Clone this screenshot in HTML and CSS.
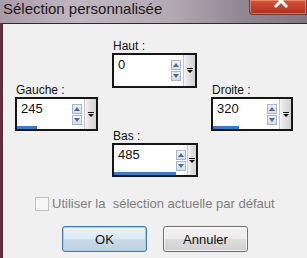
FILE: index.html
```html
<!DOCTYPE html>
<html>
<head>
<meta charset="utf-8">
<link rel="stylesheet" href="styles.css">
</head>
<body>
<div class="window">
  <div class="titlebar">
    <span class="title">Sélection personnalisée</span>
    <div class="close">
      <svg class="x" width="16" height="10" viewBox="0 0 16 10"><path d="M3 -4 L13 6 M13 -4 L3 6" stroke="#fff" stroke-width="3" stroke-linecap="square" fill="none"/></svg>
    </div>
  </div>
  <div class="content">
    <div class="fields">
      <div class="field f-haut">
        <div class="label">Haut :</div>
        <div class="box">
          <div class="val"><span class="num">0</span><span class="bar" style="width:0px"></span></div>
          <div class="spin"><span class="sb up"></span><span class="sb down"></span></div>
          <div class="drop"><span class="dglyph"></span></div>
        </div>
      </div>
      <div class="field f-gauche">
        <div class="label">Gauche :</div>
        <div class="box">
          <div class="val"><span class="num">245</span><span class="bar" style="width:20px"></span></div>
          <div class="spin"><span class="sb up"></span><span class="sb down"></span></div>
          <div class="drop"><span class="dglyph"></span></div>
        </div>
      </div>
      <div class="field f-droite">
        <div class="label">Droite :</div>
        <div class="box">
          <div class="val"><span class="num">320</span><span class="bar" style="width:26px"></span></div>
          <div class="spin"><span class="sb up"></span><span class="sb down"></span></div>
          <div class="drop"><span class="dglyph"></span></div>
        </div>
      </div>
      <div class="field f-bas">
        <div class="label">Bas :</div>
        <div class="box">
          <div class="val"><span class="num">485</span><span class="bar" style="width:62px"></span></div>
          <div class="spin"><span class="sb up"></span><span class="sb down"></span></div>
          <div class="drop"><span class="dglyph"></span></div>
        </div>
      </div>
    </div>
    <div class="check-row">
      <span class="checkbox"></span>
      <span class="check-label">Utiliser la&nbsp; sélection actuelle par défaut</span>
    </div>
    <div class="buttons">
      <button class="btn btn-ok">OK</button>
      <button class="btn">Annuler</button>
    </div>
  </div>
</div>
</body>
</html>
```
FILE: styles.css
```css
* { box-sizing: border-box; }
html, body { margin: 0; padding: 0; }
body {
  width: 307px;
  height: 258px;
  overflow: hidden;
  font-family: "Liberation Sans", Arial, sans-serif;
  background: #f0f0f0;
}
.window {
  width: 307px;
  height: 258px;
  border-left: 2px solid #6e2c3a;
  display: flex;
  flex-direction: column;
}
.titlebar {
  height: 23px;
  flex: none;
  display: flex;
  justify-content: space-between;
  align-items: flex-start;
  margin-left: -2px;
  background: linear-gradient(90deg, #a99ca9 0%, #c0b6c0 25%, #b4aab4 55%, #908892 78%, #807882 100%);
}
.title {
  font-family: "Liberation Sans", Arial, sans-serif;
  font-size: 15px;
  line-height: 17px;
  color: #1a1a1a;
  padding-left: 3px;
  padding-top: 0px;
}
.close {
  width: 58px;
  height: 15px;
  border: 1px solid #7a3a30;
  border-top: none;
  border-radius: 0 0 0 4px;
  background: linear-gradient(180deg, #d4583c 0%, #c4402a 50%, #b02e1e 100%);
  box-shadow: inset 0 0 0 1px rgba(255,190,170,0.45);
  display: flex;
  justify-content: center;
  align-items: flex-start;
  overflow: hidden;
}
.x { display: block; margin-left: 6px; }
.content {
  flex: 1;
  background: #f0f0f0;
  border-top: 1px solid #2e2a2e;
  border-left: 1px solid #3a3036;
  padding: 15px 0 0 12px;
}
.fields {
  display: grid;
  grid-template-columns: 83px 85px 82px;
  grid-template-rows: 44px 46px 49px;
  column-gap: 14px;
}
.field { align-self: start; }
.f-haut { grid-column: 2; grid-row: 1; }
.f-gauche { grid-column: 1; grid-row: 2; }
.f-droite { grid-column: 3; grid-row: 2; }
.f-bas { grid-column: 2; grid-row: 3; margin-right: -1px; }
.f-haut .box { height: 35px; }
.label {
  font-size: 12px;
  line-height: 14px;
  color: #111;
  padding-left: 1px;
}
.box {
  height: 34px;
  border: 2px solid #161616;
  background: #fff;
  display: flex;
}
.val {
  flex: 1;
  display: flex;
  flex-direction: column;
  justify-content: space-between;
  align-items: flex-start;
}
.num {
  font-size: 13px;
  line-height: 15px;
  color: #111;
  padding: 2px 0 0 4px;
}
.bar {
  height: 3px;
  background: #3a7ccc;
}
.spin {
  width: 11px;
  display: flex;
  flex-direction: column;
  padding-top: 5px;
  gap: 1px;
  margin-right: 1px;
}
.sb {
  width: 10px;
  height: 10px;
  border: 1px solid #a8b6c6;
  background: linear-gradient(180deg, #eef2f7, #d3dce7);
  display: flex;
  justify-content: center;
  align-items: center;
}
.sb::after {
  content: "";
  width: 0; height: 0;
  border-left: 3px solid transparent;
  border-right: 3px solid transparent;
}
.up::after { border-bottom: 4px solid #4d6c94; }
.down::after { border-top: 4px solid #4d6c94; }
.drop {
  width: 12px;
  background: linear-gradient(90deg, #f4f4f4 0%, #e2e2e2 40%, #d2d2d2 100%);
  border-left: 1px solid #c8c8c8;
  display: flex;
  justify-content: center;
  align-items: center;
}
.dglyph {
  width: 6px;
  display: flex;
  flex-direction: column;
  align-items: center;
  gap: 1px;
}
.dglyph::before {
  content: "";
  width: 6px;
  height: 1px;
  background: #111;
}
.dglyph::after {
  content: "";
  width: 0; height: 0;
  border-left: 3px solid transparent;
  border-right: 3px solid transparent;
  border-top: 3px solid #111;
}
.check-row {
  margin-top: 19px;
  margin-left: 20px;
  display: flex;
  align-items: center;
  height: 14px;
}
.checkbox {
  width: 14px;
  height: 14px;
  border: 1px solid #c2c2c2;
  background: #f6f6f6;
  margin-right: 3px;
}
.check-label {
  font-size: 13px;
  color: #7e7e7e;
  line-height: 14px;
}
.buttons {
  margin-top: 15px;
  margin-left: 47px;
  display: flex;
  gap: 16px;
}
.btn {
  width: 85px;
  height: 26px;
  font-family: "Liberation Sans", Arial, sans-serif;
  font-size: 13px;
  color: #111;
  border: 1px solid #707070;
  border-radius: 3px;
  background: linear-gradient(180deg, #f3f3f3 0%, #ececec 48%, #dddddd 52%, #d0d0d0 100%);
  box-shadow: inset 0 0 0 1px rgba(255,255,255,0.7);
  padding: 0;
}
.btn-ok {
  border-color: #3d7bad;
  background: linear-gradient(180deg, #eaf4fa 0%, #dceaf3 48%, #c8dbe8 52%, #bcd3e2 100%);
  box-shadow: inset 0 0 0 1px #9ed2f0;
}
```
